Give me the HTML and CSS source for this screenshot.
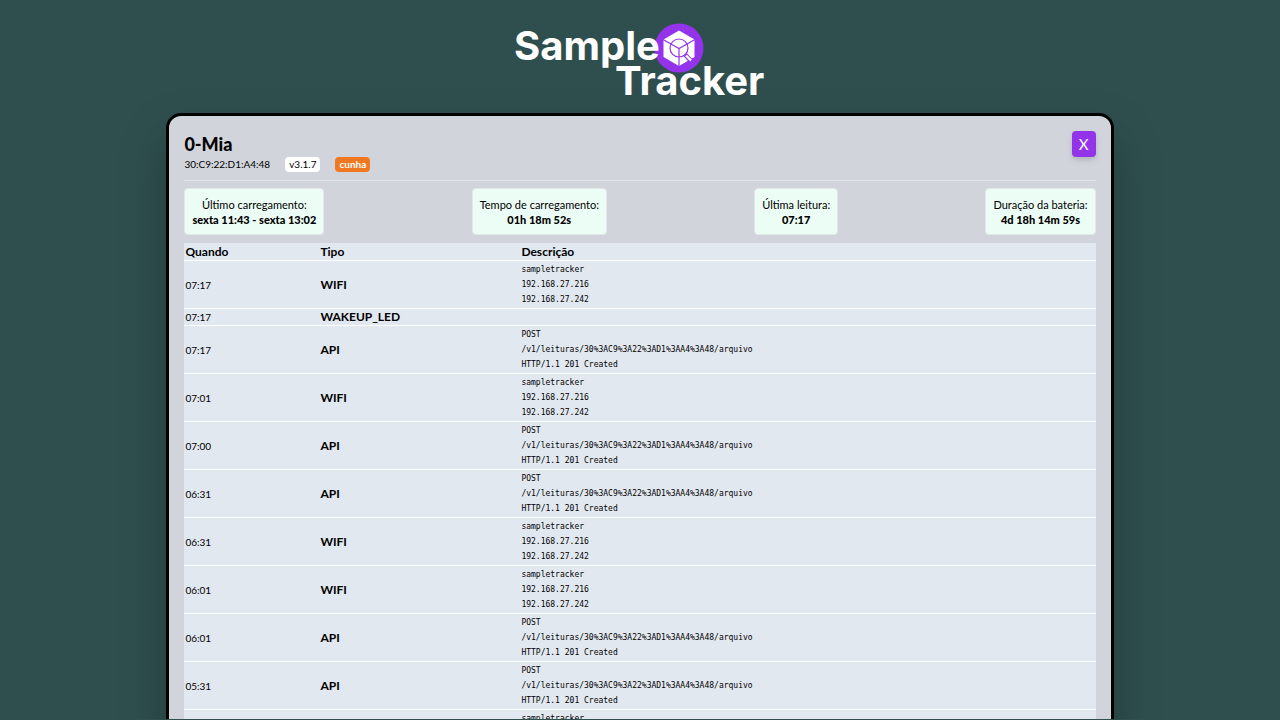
FILE: index.html
```html
<!DOCTYPE html>
<html lang="pt-BR">
<head>
    <meta charset="utf-8">
    <title>Sample Tracker</title>
    <link rel="stylesheet" href="styles.css">
</head>
<body>
    <div class="app">
        <header class="logo">
            <svg width="256" height="84" viewBox="0 0 256 84" role="img" aria-label="Sample Tracker">
                <circle cx="167" cy="30" r="24.5" fill="#9333ea"/>
                <path d="M167 12.5 L182.5 21.5 V39 L167 48 L151.5 39 V21.5 Z" fill="#fff"/>
                <g fill="none" stroke="#9333ea" stroke-width="1.2">
                    <path d="M151 21.5 L167 30.5 L183 21.5 M167 30.5 V48"/>
                    <circle cx="167" cy="30" r="9"/>
                    <path d="M173 36.500 L179 43" stroke-width="4.500"/>
                    <path d="M174 37.500 L179 42.500" stroke="#fff" stroke-width="2.400"/>
                </g>
                <text x="2" y="42">Sample</text>
                <text x="103" y="77">Tracker</text>
            </svg>
        </header>
        <main class="panel">
            <div class="panel-header">
                <div>
                    <h1>0-Mia</h1>
                    <div class="device">
                        <span>30:C9:22:D1:A4:48</span>
                        <span class="badge">v3.1.7</span>
                        <span class="badge badge-orange">cunha</span>
                    </div>
                </div>
                <button class="close" type="button">X</button>
            </div>
            <div class="stats">
                <div class="stat">Último carregamento:<b>sexta 11:43 - sexta 13:02</b></div>
                <div class="stat">Tempo de carregamento:<b>01h 18m 52s</b></div>
                <div class="stat">Última leitura:<b>07:17</b></div>
                <div class="stat">Duração da bateria:<b>4d 18h 14m 59s</b></div>
            </div>
            <table class="events">
                <thead>
                    <tr><th class="when">Quando</th><th class="type">Tipo</th><th>Descrição</th></tr>
                </thead>
                <tbody>
                    <tr><td>07:17</td><th>WIFI</th><td class="log">sampletracker<br>192.168.27.216<br>192.168.27.242</td></tr>
                    <tr><td>07:17</td><th>WAKEUP_LED</th><td class="log"></td></tr>
                    <tr><td>07:17</td><th>API</th><td class="log">POST<br>/v1/leituras/30%3AC9%3A22%3AD1%3AA4%3A48/arquivo<br>HTTP/1.1 201 Created</td></tr>
                    <tr><td>07:01</td><th>WIFI</th><td class="log">sampletracker<br>192.168.27.216<br>192.168.27.242</td></tr>
                    <tr><td>07:00</td><th>API</th><td class="log">POST<br>/v1/leituras/30%3AC9%3A22%3AD1%3AA4%3A48/arquivo<br>HTTP/1.1 201 Created</td></tr>
                    <tr><td>06:31</td><th>API</th><td class="log">POST<br>/v1/leituras/30%3AC9%3A22%3AD1%3AA4%3A48/arquivo<br>HTTP/1.1 201 Created</td></tr>
                    <tr><td>06:31</td><th>WIFI</th><td class="log">sampletracker<br>192.168.27.216<br>192.168.27.242</td></tr>
                    <tr><td>06:01</td><th>WIFI</th><td class="log">sampletracker<br>192.168.27.216<br>192.168.27.242</td></tr>
                    <tr><td>06:01</td><th>API</th><td class="log">POST<br>/v1/leituras/30%3AC9%3A22%3AD1%3AA4%3A48/arquivo<br>HTTP/1.1 201 Created</td></tr>
                    <tr><td>05:31</td><th>API</th><td class="log">POST<br>/v1/leituras/30%3AC9%3A22%3AD1%3AA4%3A48/arquivo<br>HTTP/1.1 201 Created</td></tr>
                    <tr><td>05:31</td><th>WIFI</th><td class="log">sampletracker<br>192.168.27.216<br>192.168.27.242</td></tr>
                </tbody>
            </table>
        </main>
    </div>
</body>
</html>
```
FILE: styles.css
```css
* {
    box-sizing: border-box;
}
body {
    margin: 0;
    background: #2f4f4f;
    color: #000;
    font-family: "Gill Sans", "Gill Sans MT", Lato, sans-serif;
    font-size: 12px;
    line-height: 15px;
}
.app {
    height: calc(100vh - 1px);
    overflow: hidden;
}
.logo {
    display: flex;
    justify-content: center;
    padding: 18px 0 11px;
}
.logo svg {
    overflow: visible;
}
.logo text {
    fill: #fff;
    font-family: Inter, sans-serif;
    font-size: 40px;
    font-weight: 700;
}
.panel {
    width: 74%;
    margin: 0 auto;
    padding: 15px;
    background: #d1d5db;
    border: 3px solid #000;
    border-radius: 15px;
    box-shadow: 0 24px 48px rgba(0, 0, 0, 0.25);
}
.panel-header {
    display: flex;
    justify-content: space-between;
    align-items: flex-start;
    padding-bottom: 8px;
    border-bottom: 1px solid #e5e7eb;
}
h1 {
    margin: 0;
    font-size: 18px;
    font-weight: 900;
    line-height: 26px;
}
.device {
    display: flex;
    gap: 15px;
    font-size: 10px;
}
.badge {
    padding: 0 4px;
    background: #fff;
    border-radius: 4px;
}
.badge-orange {
    background: #f07820;
    color: #fff;
    font-weight: bold;
}
.close {
    width: 24px;
    height: 26px;
    padding: 0;
    background: #9333ea;
    border: 0;
    border-radius: 4px;
    box-shadow: 0 3px 5px rgba(0, 0, 0, 0.15);
    color: #fff;
    font: 15px Lato, sans-serif;
}
.stats {
    display: flex;
    justify-content: space-between;
    padding: 7px 0 8px;
    text-align: center;
}
.stat {
    padding: 8px 7px 7px;
    background: #ecfdf5;
    border: 1px solid #e5e7eb;
    border-radius: 4px;
    font-size: 11px;
}
.stat b {
    display: block;
    font-weight: 900;
}
.events {
    width: 100%;
    background: #e2e8f0;
    border-collapse: collapse;
    text-align: left;
}
.events tr {
    border-bottom: 1px solid #fff;
}
.events th,
.events td {
    padding: 1px;
}
.events td {
    font-size: 10px;
}
.events tbody th,
.events tbody td:first-child {
    line-height: 14px;
}
.when {
    width: 135px;
}
.type {
    width: 201px;
}
.events .log {
    font-family: Consolas, "DejaVu Sans Mono", monospace;
    font-size: 8px;
}
```
